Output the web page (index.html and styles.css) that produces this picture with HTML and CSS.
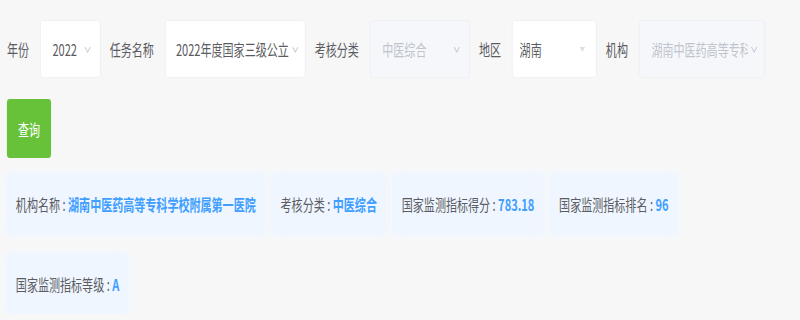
FILE: index.html
```html
<!DOCTYPE html>
<html lang="zh-CN">
<head>
    <meta charset="UTF-8">
    <meta name="viewport" content="width=device-width, initial-scale=1.0">
    <title>国家监测指标查询</title>
    <link rel="stylesheet" href="styles.css">
</head>
<body>
    <div class="page">
        <!-- 查询条件 -->
        <div class="filters">
            <span class="label">年份</span>
            <div class="select select-year">
                <span class="value">2022</span>
                <svg class="arrow" width="10" height="7" viewBox="0 0 10 7"><polyline points="1,1 5,6 9,1" fill="none" stroke="#c0c4cc" stroke-width="1.2"/></svg>
            </div>
            <span class="label">任务名称</span>
            <div class="select select-task">
                <span class="value">2022年度国家三级公立</span>
                <svg class="arrow" width="10" height="7" viewBox="0 0 10 7"><polyline points="1,1 5,6 9,1" fill="none" stroke="#c0c4cc" stroke-width="1.2"/></svg>
            </div>
            <span class="label">考核分类</span>
            <div class="select select-type disabled">
                <span class="value">中医综合</span>
                <svg class="arrow" width="10" height="7" viewBox="0 0 10 7"><polyline points="1,1 5,6 9,1" fill="none" stroke="#c0c4cc" stroke-width="1.2"/></svg>
            </div>
            <span class="label">地区</span>
            <div class="select select-area">
                <span class="value">湖南</span>
                <span class="caret"></span>
            </div>
            <span class="label">机构</span>
            <div class="select select-org disabled">
                <span class="value">湖南中医药高等专科</span>
                <svg class="arrow" width="10" height="7" viewBox="0 0 10 7"><polyline points="1,1 5,6 9,1" fill="none" stroke="#c0c4cc" stroke-width="1.2"/></svg>
            </div>
        </div>

        <div class="actions">
            <button class="btn-query">查询</button>
        </div>

        <!-- 结果 -->
        <div class="info">
            <div class="chip"><span class="k">机构名称 : </span><span class="v">湖南中医药高等专科学校附属第一医院</span></div>
            <div class="chip"><span class="k">考核分类 : </span><span class="v">中医综合</span></div>
            <div class="chip"><span class="k">国家监测指标得分 : </span><span class="v">783.18</span></div>
            <div class="chip"><span class="k">国家监测指标排名 : </span><span class="v">96</span></div>
            <div class="chip"><span class="k">国家监测指标等级 : </span><span class="v">A</span></div>
        </div>
    </div>
</body>
</html>
```

FILE: styles.css
```css
body {
    margin: 0;
    background-color: #f7f7f7;
    font-family: "Noto Sans CJK SC", "Noto Sans", sans-serif;
    font-size: 16px;
    color: #5a5c61;
    overflow: hidden;
}
/* the screenshot is horizontally condensed */
.page {
    width: 1160px;
    padding: 20px 0 0 10px;
    box-sizing: border-box;
    transform: scaleX(0.69);
    transform-origin: 0 0;
}
.filters {
    display: flex;
    align-items: center;
}
.label {
    margin-right: 16px;
    white-space: nowrap;
}
.select {
    display: flex;
    align-items: center;
    height: 58px;
    box-sizing: border-box;
    padding: 0 13px 0 17px;
    margin-right: 13px;
    background-color: #fff;
    border: 1px solid #ebeef5;
    border-radius: 4px;
    white-space: nowrap;
}
.select .value {
    flex: 1;
    overflow: hidden;
}
.select.disabled {
    background-color: #f5f7fa;
    border-color: #eceff4;
    color: #c0c4cc;
}
.select-year { width: 88px; }
.select-task { width: 204px; padding-left: 15px; padding-right: 9px; }
.select-type { width: 145px; }
.select-area { width: 123px; padding-left: 10px; padding-right: 16px; }
.select-org { width: 183px; padding-right: 10px; }
.arrow {
    flex: none;
    margin-left: 4px;
}
.caret {
    width: 0;
    height: 0;
    border-left: 4px solid transparent;
    border-right: 4px solid transparent;
    border-top: 5px solid #dcdfe6;
}
.actions {
    margin-top: 21px;
}
.btn-query {
    width: 64px;
    height: 59px;
    border: none;
    border-radius: 4px;
    background-color: #67c23a;
    color: #fff;
    font-family: inherit;
    font-size: 16px;
}
.info {
    display: flex;
    flex-wrap: wrap;
    max-width: 1040px;
    gap: 20px 10px;
    margin-top: 16px;
}
.chip {
    display: flex;
    align-items: center;
    height: 60px;
    padding: 0 13px;
    background-color: #eff6ff;
    box-shadow: 0 0 8px 3px #f2f8ff;
    border-radius: 6px;
    white-space: pre;
}
.chip .v {
    color: #409eff;
    font-weight: bold;
}
```
